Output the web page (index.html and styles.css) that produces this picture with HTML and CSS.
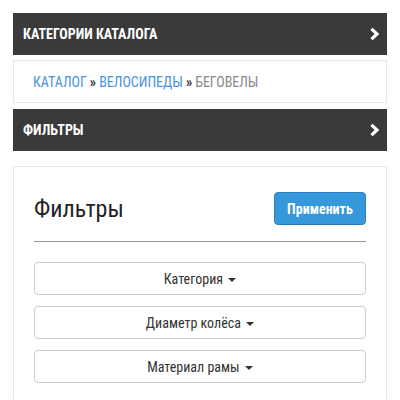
FILE: index.html
```html
<!DOCTYPE html>
<html lang="ru">
<head>
<meta charset="utf-8">
<link rel="stylesheet" href="styles.css">
</head>
<body>
<div class="page">
  <div class="bar">
    <span class="bar-title">Категории каталога</span>
    <svg class="chev" width="11" height="14" viewBox="0 0 11 14"><polyline points="2.5,1.8 8,7 2.5,12.2" fill="none" stroke="#fff" stroke-width="3.2"/></svg>
  </div>
  <div class="crumbs">
    <a class="crumb">Каталог</a><span class="sep">»</span><a class="crumb">Велосипеды</a><span class="sep">»</span><span class="crumb-cur">Беговелы</span>
  </div>
  <div class="bar bar-second">
    <span class="bar-title">Фильтры</span>
    <svg class="chev" width="11" height="14" viewBox="0 0 11 14"><polyline points="2.5,1.8 8,7 2.5,12.2" fill="none" stroke="#fff" stroke-width="3.2"/></svg>
  </div>
  <div class="panel">
    <div class="panel-head">
      <h2 class="panel-title">Фильтры</h2>
      <button class="apply">Применить</button>
    </div>
    <hr class="rule">
    <div class="drops">
      <button class="drop">Категория <span class="caret"></span></button>
      <button class="drop">Диаметр колёса <span class="caret"></span></button>
      <button class="drop">Материал рамы <span class="caret"></span></button>
    </div>
  </div>
</div>
</body>
</html>
```
FILE: styles.css
```css
html, body {
  margin: 0;
  padding: 0;
  background: #fff;
}
body {
  font-family: "Roboto Condensed", "Liberation Sans Narrow", "Roboto", sans-serif;
  color: #333;
}
.page {
  padding: 13px 13px 0 13px;
}
.bar {
  height: 42px;
  background: #3a3a3a;
  display: flex;
  align-items: center;
  justify-content: space-between;
  padding: 0 7px 0 10px;
}
.bar-second {
  margin-top: 6px;
}
.bar-title {
  color: #fff;
  font-weight: bold;
  font-size: 14px;
  text-transform: uppercase;
}
.chev {
  display: block;
}
.crumbs {
  margin-top: 5px;
  height: 41px;
  border: 1px solid #e6e6e6;
  display: flex;
  align-items: center;
  padding-left: 19px;
  font-size: 14px;
  text-transform: uppercase;
}
.crumb {
  color: #4a94dc;
}
.sep {
  color: #333;
  font-weight: bold;
  margin: 0 3px;
}
.crumb-cur {
  color: #8a8a8a;
}
.panel {
  margin-top: 15px;
  border: 1px solid #e6e6e6;
  border-bottom: none;
  padding: 25px 20px 16px 20px;
}
.panel-head {
  display: flex;
  justify-content: space-between;
  align-items: center;
}
.panel-title {
  margin: 0;
  font-size: 24px;
  font-weight: normal;
  color: #222;
}
.apply {
  width: 92px;
  height: 33px;
  background: #3498db;
  border: 1px solid #2a7fba;
  border-radius: 4px;
  color: #fff;
  font-family: inherit;
  font-weight: bold;
  font-size: 14px;
  padding: 0;
}
.rule {
  margin: 16px 0 0 0;
  border: none;
  border-top: 1px solid #999;
  height: 0;
}
.drops {
  margin-top: 20px;
  display: flex;
  flex-direction: column;
  gap: 11px;
}
.drop {
  height: 33px;
  background: #fff;
  border: 1px solid #ccc;
  border-radius: 4px;
  font-family: inherit;
  font-size: 14px;
  color: #333;
  padding: 0;
}
.caret {
  display: inline-block;
  width: 0;
  height: 0;
  border-top: 4px solid #333;
  border-left: 4px solid transparent;
  border-right: 4px solid transparent;
  vertical-align: middle;
  margin-left: 2px;
}
```
